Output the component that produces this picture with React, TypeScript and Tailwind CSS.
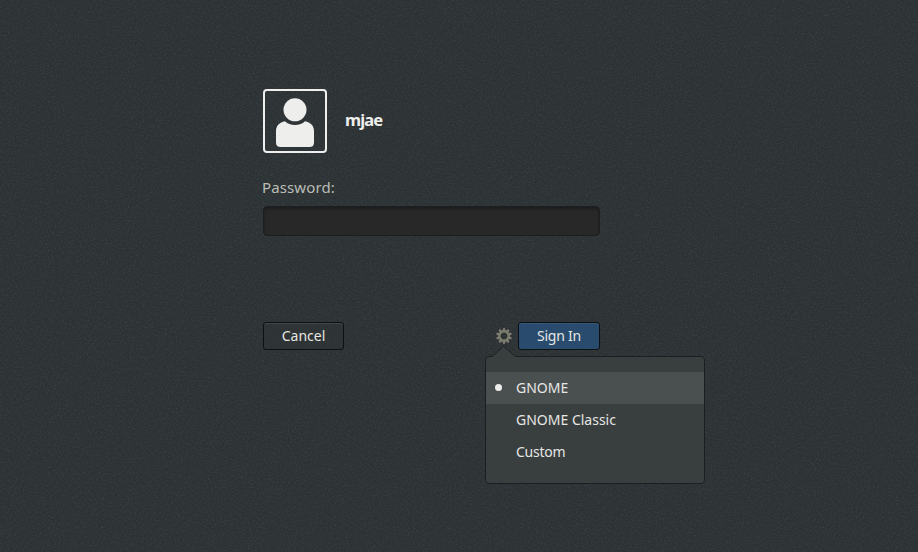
const sessions = [
  { name: 'GNOME', tracking: 'tracking-[0px]' },
  { name: 'GNOME Classic', tracking: 'tracking-[0px]' },
  { name: 'Custom', tracking: 'tracking-[-0.25px]' },
];

function NoiseTexture() {
  return (
    <svg className="pointer-events-none absolute inset-0 h-full w-full" aria-hidden="true">
      <filter id="grain" x="0" y="0" width="100%" height="100%" colorInterpolationFilters="sRGB">
        <feTurbulence type="fractalNoise" baseFrequency="0.6" numOctaves="2" seed="7" stitchTiles="stitch" />
        <feColorMatrix values="0 0 0 0 0.6  0 0 0 0 0.66  0 0 0 0 0.7  0.26 0 0 0 -0.12" />
      </filter>
      <rect width="100%" height="100%" filter="url(#grain)" />
    </svg>
  );
}

function Avatar() {
  return (
    <div className="h-16 w-16 rounded-[4px] border-2 border-[#eeeeec]">
      <svg viewBox="2 2 60 60" className="block h-[60px] w-[60px]">
        <path
          d="M22 32.300c2.500 2.500 6 3.700 10 3.700s7.500-1.200 10-3.700c5.500 1 9 4.500 9 9.700v11.500c0 3-1.500 4.500-4.500 4.500h-29c-3 0-4.500-1.500-4.500-4.500V42c0-5.200 3.500-8.700 9-9.700z"
          fill="#eeeeec"
        />
        <circle cx="32" cy="20.800" r="11.500" fill="#eeeeec" />
      </svg>
    </div>
  );
}

function Gear() {
  const teeth = [0, 36, 72, 108, 144, 180, 216, 252, 288, 324];
  return (
    <svg viewBox="-8 -8 16 16" className="h-4 w-4">
      <circle r="4.700" fill="none" stroke="#7c7c70" strokeWidth="2.500" />
      {teeth.map((a) => (
        <path key={a} d="M-1.500-5L-.8-8H.8L1.500-5z" fill="#7c7c70" transform={`rotate(${a})`} />
      ))}
    </svg>
  );
}

function SessionMenu() {
  return (
    <div className="absolute left-[222px] top-[34px] h-32 w-[220px] rounded-[4px] border border-[#1c1f1f] bg-[#393f3f] py-[15px]">
      <svg viewBox="0 0 26 12" className="absolute left-[5px] top-[-11px] h-3 w-[26px] overflow-visible">
        <path d="M0 12V10.500H1.500L12.500 0L24.500 10.500H26V12z" fill="#393f3f" />
        <path d="M0 10.500H1.500L12.500 0L24.500 10.500H26" fill="none" stroke="#1c1f1f" />
      </svg>
      {sessions.map((s, i) => (
        <div key={s.name} className={`flex h-8 items-center ${i === 0 ? 'bg-[#4a5050]' : ''}`}>
          <span className="flex w-[30px] justify-center pb-px pr-[5px]">
            {i === 0 && <span className="h-[7px] w-[7px] rounded-full bg-[#eeeeec]" />}
          </span>
          <span className={`whitespace-nowrap text-[14px] leading-5 text-[#e6e6e4] ${s.tracking}`}>{s.name}</span>
        </div>
      ))}
    </div>
  );
}

export default function App() {
  return (
    <main className="relative flex h-[552px] w-[918px] overflow-hidden bg-[#2d3335] font-['Noto_Sans',sans-serif]">
      <NoiseTexture />
      <section className="relative ml-[263px] mt-[89px] flex w-[337px] flex-col">
        <div className="flex items-center gap-[18px]">
          <Avatar />
          <span className="pb-[2px] text-[16.500px] font-bold leading-5 tracking-[-0.85px] text-[#eeeeec]">mjae</span>
        </div>
        <label className="-ml-px mt-[23px] text-[15px] leading-[22px] tracking-[0.12px] text-[#babdb6]">Password:</label>
        <div className="mt-[8px] h-[30px] rounded-[4px] border border-[#1c1f1f] bg-[#282828] shadow-[inset_0_2px_3px_rgba(0,0,0,0.3)]" />
        <div className="relative mt-[86px] flex h-7 items-center">
          <button className="h-7 w-[81px] rounded-[3px] border border-[#0d1011] bg-[#2e3436]/60 text-[14px] leading-5 text-[#e6e6e4] shadow-[inset_0_1px_0_#41474a]">
            Cancel
          </button>
          <span className="ml-auto mr-[6px]">
            <Gear />
          </span>
          <button className="h-7 w-[82px] rounded-[3px] border border-[#0d1011] bg-[#294c6e] text-[14px] leading-5 tracking-[-0.25px] text-[#e6e6e4] shadow-[inset_0_1px_0_#395874]">
            Sign In
          </button>
          <SessionMenu />
        </div>
      </section>
    </main>
  );
}
